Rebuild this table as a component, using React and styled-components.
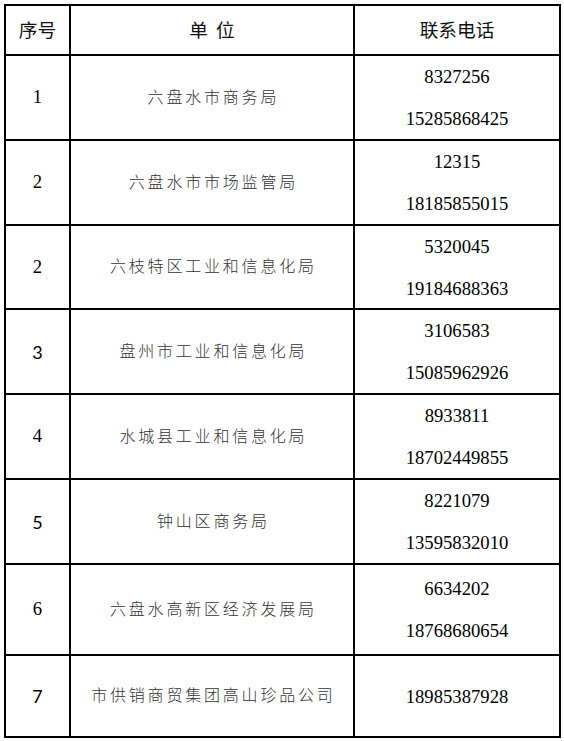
import React from "react";
import styled, { createGlobalStyle } from "styled-components";

const Global = createGlobalStyle`
  html, body { margin: 0; padding: 0; background: #fff; }
  body { width: 564px; height: 741px; overflow: hidden; }
`;

const Page = styled.div`
  padding: 4px 0 0 4px;
`;

const Table = styled.div`
  display: grid;
  grid-template-columns: 65px 284px 206px;
  width: 557px;
  box-sizing: border-box;
  border-top: 2px solid #000;
  border-left: 2px solid #000;
`;

const Cell = styled.div`
  box-sizing: border-box;
  height: ${(p) => p.$h}px;
  border-right: 2px solid #000;
  border-bottom: 2px solid #000;
  display: flex;
  flex-direction: column;
  align-items: center;
  justify-content: center;
  color: #000;
`;

const HeadText = styled.span`
  font-family: "Noto Sans CJK SC", sans-serif;
  font-size: 18.67px;
  line-height: 1;
  padding-bottom: 2px;
  word-spacing: ${(p) => p.$ws || 0}px;
  white-space: pre;
  color: #111;
`;

const Serial = styled.span`
  font-family: ${(p) =>
    p.$sans ? `Lato, "Liberation Sans", sans-serif` : `"Liberation Serif", serif`};
  font-size: ${(p) => (p.$sans ? 18 : 18.67)}px;
  line-height: 1;
  color: #000;
`;

const Unit = styled.span`
  font-family: "Noto Sans CJK SC", sans-serif;
  font-weight: 300;
  font-size: 16px;
  letter-spacing: 2.8px;
  padding-left: 2.8px;
  padding-bottom: 4px;
  line-height: 1;
  color: #333;
  white-space: nowrap;
`;

const Phones = styled.div`
  display: flex;
  flex-direction: column;
  align-items: center;
  gap: 21px;
`;

const Phone = styled.span`
  font-family: "Liberation Serif", serif;
  font-size: 18.67px;
  line-height: 21px;
  color: #000;
`;

const rows = [
  { n: "1", unit: "六盘水市商务局", phones: ["8327256", "15285868425"], h: 85 },
  { n: "2", unit: "六盘水市市场监管局", phones: ["12315", "18185855015"], h: 85 },
  { n: "2", unit: "六枝特区工业和信息化局", phones: ["5320045", "19184688363"], h: 84 },
  { n: "3", sans: true, unit: "盘州市工业和信息化局", phones: ["3106583", "15085962926"], h: 85 },
  { n: "4", unit: "水城县工业和信息化局", phones: ["8933811", "18702449855"], h: 85 },
  { n: "5", sans: true, unit: "钟山区商务局", phones: ["8221079", "13595832010"], h: 85 },
  { n: "6", unit: "六盘水高新区经济发展局", phones: ["6634202", "18768680654"], h: 91 },
  { n: "7", sans: true, unit: "市供销商贸集团高山珍品公司", phones: ["18985387928"], h: 82 },
];

export default function App() {
  return (
    <>
      <Global />
      <Page>
        <Table>
          <Cell $h={50}>
            <HeadText>序号</HeadText>
          </Cell>
          <Cell $h={50}>
            <HeadText $ws={4}>单 位</HeadText>
          </Cell>
          <Cell $h={50}>
            <HeadText>联系电话</HeadText>
          </Cell>
          {rows.map((r, i) => (
            <React.Fragment key={i}>
              <Cell $h={r.h}>
                <Serial $sans={r.sans}>{r.n}</Serial>
              </Cell>
              <Cell $h={r.h}>
                <Unit>{r.unit}</Unit>
              </Cell>
              <Cell $h={r.h}>
                <Phones>
                  {r.phones.map((p) => (
                    <Phone key={p}>{p}</Phone>
                  ))}
                </Phones>
              </Cell>
            </React.Fragment>
          ))}
        </Table>
      </Page>
    </>
  );
}
